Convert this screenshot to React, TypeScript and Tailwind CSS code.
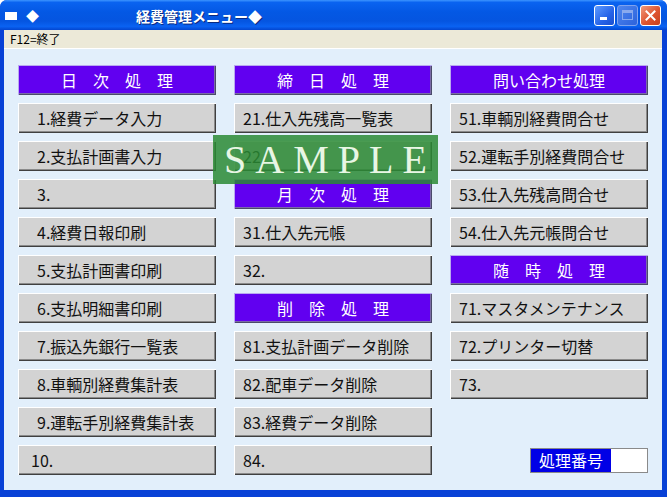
import React from "react";

const jp = { fontFamily: '"Noto Sans CJK JP", "Noto Sans", sans-serif' };

type Item =
  | { kind: "btn"; text: string; pl?: string }
  | { kind: "head"; text: string }
  | { kind: "empty" }
  | { kind: "num" };

const col1: Item[] = [
  { kind: "head", text: "日　次　処　理" },
  { kind: "btn", text: "1.経費データ入力", pl: "pl-[19px]" },
  { kind: "btn", text: "2.支払計画書入力", pl: "pl-[19px]" },
  { kind: "btn", text: "3.", pl: "pl-[19px]" },
  { kind: "btn", text: "4.経費日報印刷", pl: "pl-[19px]" },
  { kind: "btn", text: "5.支払計画書印刷", pl: "pl-[19px]" },
  { kind: "btn", text: "6.支払明細書印刷", pl: "pl-[19px]" },
  { kind: "btn", text: "7.振込先銀行一覧表", pl: "pl-[19px]" },
  { kind: "btn", text: "8.車輌別経費集計表", pl: "pl-[19px]" },
  { kind: "btn", text: "9.運転手別経費集計表", pl: "pl-[19px]" },
  { kind: "btn", text: "10.", pl: "pl-[13px]" },
];

const col2: Item[] = [
  { kind: "head", text: "締　日　処　理" },
  { kind: "btn", text: "21.仕入先残高一覧表" },
  { kind: "btn", text: "22." },
  { kind: "head", text: "月　次　処　理" },
  { kind: "btn", text: "31.仕入先元帳" },
  { kind: "btn", text: "32." },
  { kind: "head", text: "削　除　処　理" },
  { kind: "btn", text: "81.支払計画データ削除" },
  { kind: "btn", text: "82.配車データ削除" },
  { kind: "btn", text: "83.経費データ削除" },
  { kind: "btn", text: "84." },
];

const col3: Item[] = [
  { kind: "head", text: "問い合わせ処理" },
  { kind: "btn", text: "51.車輌別経費問合せ" },
  { kind: "btn", text: "52.運転手別経費問合せ" },
  { kind: "btn", text: "53.仕入先残高問合せ" },
  { kind: "btn", text: "54.仕入先元帳問合せ" },
  { kind: "head", text: "随　時　処　理" },
  { kind: "btn", text: "71.マスタメンテナンス" },
  { kind: "btn", text: "72.プリンター切替" },
  { kind: "btn", text: "73." },
  { kind: "empty" },
  { kind: "num" },
];

function Cell({ item }: { item: Item }) {
  if (item.kind === "head") {
    return (
      <div className="h-[30px] bg-[#6100f0] flex items-center justify-center text-white text-[16px] leading-none shadow-[inset_1px_1px_0_#b9a8f0,inset_-1px_-1px_0_#4a4a6a,inset_-2px_-2px_0_#7a6aa8]">
        <span className="whitespace-pre" style={jp}>{item.text}</span>
      </div>
    );
  }
  if (item.kind === "btn") {
    return (
      <div
        className={`h-[30px] bg-[#d3d3d3] flex items-center text-[16px] leading-none text-[#111] shadow-[inset_1px_1px_0_#ffffff,inset_-1px_-1px_0_#404040,inset_-2px_-2px_0_#8a8a8a] ${item.pl ?? "pl-[9px]"}`}
      >
        <span className="whitespace-pre" style={jp}>{item.text}</span>
      </div>
    );
  }
  if (item.kind === "num") {
    return (
      <div className="h-[30px] flex items-center justify-end">
        <div className="flex h-[25px] border border-[#8a8a8a] bg-white mr-0">
          <div className="w-[80px] bg-[#0000e6] text-white text-[16px] flex items-center justify-center leading-none" style={jp}>
            処理番号
          </div>
          <div className="w-[36px] bg-white" />
        </div>
      </div>
    );
  }
  return <div className="h-[30px]" />;
}

function Column({ items }: { items: Item[] }) {
  return (
    <div className="flex flex-col gap-[8px]">
      {items.map((it, i) => (
        <Cell key={i} item={it} />
      ))}
    </div>
  );
}

export default function App() {
  return (
    <div className="w-[667px] h-[497px] bg-white overflow-hidden">
      <div className="w-[667px] h-[497px] flex flex-col bg-[#0841d6] rounded-t-[7px] overflow-hidden">
        {/* Title bar */}
        <div className="h-[30px] shrink-0 flex items-center bg-[linear-gradient(180deg,#3d95ff_0%,#0a63f0_8%,#0458e4_40%,#0555e0_70%,#0a62f2_88%,#0346d0_100%)] relative">
          <div className="ml-[5px] w-[12px] h-[8px] bg-white mt-[2px]" />
          <span className="ml-[9px] text-white text-[13px] leading-none mt-[1px]" style={jp}>◆</span>
          <span
            className="ml-[97px] text-white text-[14px] font-bold leading-none mt-[1px] [text-shadow:1px_1px_0_#0a2a80]"
            style={jp}
          >
            経費管理メニュー◆
          </span>
          <div className="ml-auto mr-[6px] flex gap-[2px] items-center">
            <div className="w-[21px] h-[21px] rounded-[3px] border border-white bg-[linear-gradient(135deg,#5d9bff,#2663e8_60%,#1a4fd0)] relative">
              <div className="absolute left-[5px] bottom-[5px] w-[7px] h-[3px] bg-white" />
            </div>
            <div className="w-[21px] h-[21px] rounded-[3px] border border-[#7fa2ee] bg-[linear-gradient(135deg,#4f86ee,#2c62dc)] flex items-center justify-center">
              <div className="w-[11px] h-[10px] border border-[#89a9ee] border-t-[3px]" />
            </div>
            <div className="w-[21px] h-[21px] rounded-[3px] border border-white bg-[linear-gradient(135deg,#f09a7c,#de5430_55%,#c8401c)] flex items-center justify-center">
              <svg width="11" height="11" viewBox="0 0 11 11">
                <path d="M1.5 1.5 L9.5 9.5 M9.5 1.5 L1.5 9.5" stroke="white" strokeWidth="2" strokeLinecap="square" />
              </svg>
            </div>
          </div>
        </div>
        {/* body with frame */}
        <div className="flex-1 flex flex-col mx-[4px] mb-[7px] mr-[5px]">
          <div className="h-[18px] bg-[#ece9d8] flex items-center pl-[6px] text-[12px] leading-none text-black" style={jp}>
            F12=終了
          </div>
          <div className="h-[1px] bg-white" />
          <div className="flex-1 bg-[#e2effb] pt-[16px] pl-[14px] pr-[10px] relative">
            <div className="grid grid-cols-[198px_198px_198px] gap-x-[18px]">
              <Column items={col1} />
              <Column items={col2} />
              <Column items={col3} />
            </div>
            {/* SAMPLE watermark */}
            <div className="absolute left-[209px] top-[86px] w-[225px] h-[49px] bg-[#2a8a34]/85 flex items-center justify-center">
              <span
                className="text-[#e8f6e4] text-[40px] leading-none tracking-[9px] pl-[9px]"
                style={{ fontFamily: '"Liberation Serif", "DejaVu Serif", serif' }}
              >
                SAMPLE
              </span>
            </div>
          </div>
        </div>
      </div>
    </div>
  );
}
